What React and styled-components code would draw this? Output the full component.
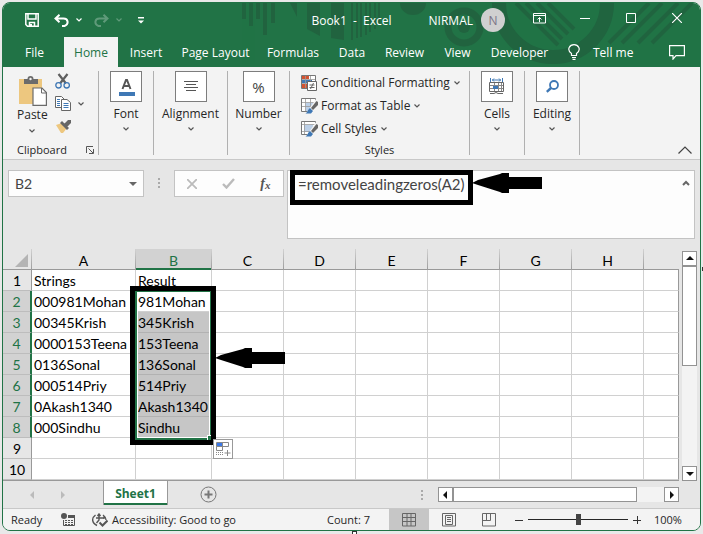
import React from "react";
import styled, { createGlobalStyle, css } from "styled-components";

const green = "#217346";
const ui = `"Open Sans", "Noto Sans", sans-serif`;
const sheetFont = `Lato, "Open Sans", sans-serif`;

const Global = createGlobalStyle`
  *, *::before, *::after { box-sizing: border-box; }
  body { margin: 0; background: #e9e9e9; font-family: ${ui}; font-size: 12px; color: #262626; }
  button, input, textarea { font: inherit; color: inherit; margin: 0; padding: 0; border: 0; background: none; border-radius: 0; outline: none; }
  button { cursor: pointer; }
  svg { display: block; flex: none; }
`;

const Desktop = styled.div`
  position: relative;
  min-height: 100vh;
  padding: 2px 2px 3px;
  display: flex;
  flex-direction: column;
`;
const Window = styled.main`
  flex: 1;
  display: flex;
  flex-direction: column;
  border: 1px solid ${green};
  border-radius: 8px;
  overflow: hidden;
  background: #e6e6e6;
`;
const Handle = styled.i`
  position: absolute;
  width: 5px;
  height: 4px;
  border: 1px solid #333;
  background: #fff;
  ${(p) => (p.$side === "right" ? css`right: -4px; top: 50%;` : css`bottom: -1px; left: 50%;`)}
`;

/* Header */
const Header = styled.header`
  position: relative;
  background: ${green};
  color: #fff;
`;
const Pattern = styled.svg`
  position: absolute;
  top: 0;
  right: 0;
`;
const TitleBar = styled.div`
  position: relative;
  display: grid;
  grid-template-columns: 1fr auto 1fr;
  align-items: center;
  height: 34px;
`;
const QuickAccess = styled.div`
  display: flex;
  align-items: center;
  padding-left: 22px;
`;
const QuickButton = styled.button`
  display: flex;
  align-items: center;
  gap: 7px;
  margin-right: ${(p) => p.$gap || 0}px;
  opacity: ${(p) => (p.disabled ? 0.28 : 1)};
`;
const Title = styled.h1`
  margin: 0;
  font-size: 12px;
  font-weight: 400;
  white-space: pre;
`;
const Account = styled.div`
  display: flex;
  align-items: center;
  justify-content: flex-end;
`;
const Avatar = styled.span`
  display: grid;
  place-items: center;
  width: 24px;
  height: 24px;
  margin: 0 11px 0 8px;
  border-radius: 50%;
  background: #d0d0d0;
  color: #7a7486;
`;
const WindowButton = styled.button`
  display: grid;
  place-items: center;
  width: 46px;
  height: 30px;
  margin-bottom: 4px;
`;
const Tabs = styled.nav`
  position: relative;
  display: flex;
  height: 30px;
`;
const Tab = styled.button`
  width: ${(p) => p.$w}px;
  text-align: center;
  white-space: nowrap;
  color: ${(p) => (p.$active ? green : "#fff")};
  background: ${(p) => (p.$active ? "#f3f3f3" : "none")};
`;
const TellMe = styled.button`
  display: flex;
  align-items: center;
  gap: 13px;
  margin-left: 10px;
`;
const CommentButton = styled.button`
  margin-left: auto;
  padding-right: 15px;
`;

/* Ribbon */
const Ribbon = styled.section`
  display: flex;
  height: 93px;
  padding: 4px 0;
  background: #f3f3f3;
  border-bottom: 1px solid #c8c8c8;
`;
const Group = styled.div`
  position: relative;
  display: flex;
  flex-direction: column;
  width: ${(p) => p.$w}px;
  border-right: 1px solid #b0b0b0;
`;
const GroupName = styled.div`
  display: flex;
  align-items: center;
  justify-content: ${(p) => (p.$spread ? "space-between" : "center")};
  height: 10px;
  margin-top: auto;
  padding: ${(p) => (p.$spread ? "0 4px 0 14px" : "0")};
  font-size: 11px;
  line-height: 10px;
`;
const Collapsed = styled.button`
  display: flex;
  flex-direction: column;
  align-items: center;
  white-space: nowrap;
  line-height: 16px;
`;
const IconBox = styled.span`
  display: grid;
  place-items: center;
  width: 32px;
  height: 31px;
  margin-bottom: 4px;
  border: 1px solid #7d7d7d;
  background: #fff;
  font-size: 15px;
  color: #444;
`;
const LabelText = styled.span`
  margin-bottom: 5px;
`;
const ClipRow = styled.div`
  display: flex;
  gap: 7px;
  padding-left: 14px;
`;
const Paste = styled.button`
  display: flex;
  flex-direction: column;
  align-items: center;
  gap: 1px;
  line-height: 16px;
  padding-top: 4px;
`;
const SmallTools = styled.div`
  display: flex;
  flex-direction: column;
  align-items: flex-start;
  gap: 6px;
  padding-top: 1px;
`;
const Small = styled.button`
  display: flex;
  align-items: center;
  gap: 6px;
  height: 17px;
`;
const StyleButton = styled.button`
  display: flex;
  align-items: center;
  gap: 3px;
  height: 23px;
  padding-left: 11px;
  white-space: nowrap;
  svg:last-child { margin-left: 1px; }
`;
const CollapseRibbon = styled.button`
  align-self: flex-end;
  margin-left: auto;
  padding: 0 8px 1px 0;
`;

/* Formula bar */
const FormulaBar = styled.section`
  display: flex;
  align-items: flex-start;
  padding: 10px 5px 10px;
`;
const NameBox = styled.div`
  display: flex;
  align-items: center;
  width: 136px;
  height: 27px;
  border: 1px solid #c3c3c3;
  background: #fdfdfd;
  padding: 0 6px;
  input { flex: 1; min-width: 0; font: 14px ${sheetFont}; color: #444; }
`;
const Dots = styled.div`
  display: grid;
  gap: 2px;
  margin: ${(p) => p.$margin};
  i { width: 2px; height: 2px; background: #aaa; }
`;
const EntryButtons = styled.div`
  display: flex;
  align-items: center;
  justify-content: space-around;
  width: 110px;
  height: 27px;
  border: 1px solid #c3c3c3;
  background: #fdfdfd;
`;
const Fx = styled.span`
  font: italic 700 14px "Liberation Serif", serif;
  color: #555;
  sub { font-size: 11px; vertical-align: -1px; }
`;
const FormulaField = styled.div`
  position: relative;
  display: flex;
  flex: 1;
  align-items: flex-start;
  height: 69px;
  margin-left: 3px;
  border: 1px solid #c3c3c3;
  background: #fdfdfd;
  textarea {
    flex: 1;
    min-width: 0;
    height: 67px;
    padding: 4px 0 0 10px;
    resize: none;
    overflow: hidden;
    font: 15px/19px ${sheetFont};
    color: #444;
  }
  button { padding: 9px 4px; }
`;
const Outline = styled.div`
  position: absolute;
  left: ${(p) => p.$x}px;
  top: ${(p) => p.$y}px;
  width: ${(p) => p.$w}px;
  height: ${(p) => p.$h}px;
  border: 5px solid #000;
  pointer-events: none;
`;
const Pointer = styled.svg`
  position: absolute;
  left: ${(p) => p.$x}px;
  top: ${(p) => p.$y}px;
`;

/* Sheet */
const SheetArea = styled.section`
  display: flex;
`;
const SheetPane = styled.div`
  position: relative;
  flex: 1;
  min-width: 0;
  border-bottom: 1px solid #999;
`;
const Table = styled.table`
  width: 100%;
  table-layout: fixed;
  border-spacing: 0;
  font: 14px/18px ${sheetFont};
  color: #000;
  th { font-weight: 400; }
  col.head { width: 29px; }
  col.a { width: 104px; }
  col.b { width: 76px; }
  col.std { width: 72px; }
`;
const ColHead = styled.th`
  height: 21px;
  padding: 2px 0 0;
  border-right: 1px solid;
  border-image: linear-gradient(#d4d4d4, #999) 1;
  box-shadow: inset 0 -1px #999;
  ${(p) => p.$selected && css`
    background: #d2d2d2;
    color: ${green};
    box-shadow: inset 0 -2px ${green};
  `}
  &:last-child { border-right: 0; }
`;
const Corner = styled(ColHead)`
  padding: 0;
  svg { margin: 2px 0 0 12px; }
`;
const RowHead = styled.th`
  height: 21px;
  padding: 2px 0 0;
  border-right: 1px solid #999;
  border-bottom: 1px solid #bdbdbd;
  ${(p) => p.$selected && css`
    background: #d2d2d2;
    color: ${green};
    border-right: 2px solid ${green};
  `}
`;
const Cell = styled.td`
  height: 21px;
  padding: 2px 0 0 2px;
  white-space: nowrap;
  border-right: 1px solid #d0d0d0;
  border-bottom: 1px solid #d0d0d0;
  background: #fff;
  &:last-child { border-right-color: #999; }
  ${(p) => p.$selected && css`
    background: #c6c6c6;
    border-bottom-color: #b2b2b2;
  `}
`;
const Selection = styled.div`
  position: absolute;
  left: 132px;
  top: 41px;
  width: 77px;
  height: 150px;
  border: 2px solid ${green};
  box-shadow: inset 0 0 0 1px #fff;
  &::after {
    content: "";
    position: absolute;
    right: -2px;
    bottom: -2px;
    width: 5px;
    height: 5px;
    background: ${green};
    border: solid #fff;
    border-width: 1px 0 0 1px;
  }
`;
const FillOptions = styled.button`
  position: absolute;
  left: 210px;
  top: 190px;
  width: 20px;
  height: 20px;
  border: 1px solid #999;
  background: #fff;
`;
const VScroll = styled.div`
  display: flex;
  flex-direction: column;
  width: 15px;
  margin: 2px 3px 0;
  background: #f3f3f3;
`;
const HScroll = styled.div`
  display: flex;
  width: 241px;
  height: 15px;
  margin-right: 21px;
  background: #f3f3f3;
`;
const ScrollButton = styled.button`
  display: grid;
  place-items: center;
  flex: none;
  width: 15px;
  height: 15px;
  border: 1px solid #939393;
  background: #fff;
`;
const Thumb = styled.div`
  border: 1px solid #939393;
  background: #fff;
  ${(p) => (p.$vertical ? css`height: 100px; margin-bottom: auto;` : css`width: 184px; margin-right: auto;`)}
`;

/* Sheet tabs and status */
const SheetTabs = styled.nav`
  display: flex;
  align-items: center;
  height: 28px;
  border-bottom: 1px solid #c8c8c8;
`;
const NavArrows = styled.div`
  display: flex;
  gap: 22px;
  width: 100px;
  padding-left: 26px;
`;
const SheetTab = styled.button`
  align-self: flex-start;
  width: 65px;
  height: 24px;
  background: #fff;
  border: solid #999;
  border-width: 0 1px;
  box-shadow: inset 0 -2px ${green};
  color: ${green};
  font-weight: 700;
`;
const AddSheet = styled.button`
  margin: 0 auto 0 32px;
`;
const Status = styled.footer`
  display: flex;
  flex: 1;
  align-items: center;
  min-height: 21px;
  background: #f3f3f3;
  font-size: 11px;
  white-space: nowrap;
`;
const Ready = styled.span`
  width: 58px;
  padding-left: 8px;
`;
const Access = styled.button`
  display: flex;
  align-items: center;
  gap: 4px;
  margin-left: 17px;
`;
const Count = styled.span`
  margin: 0 19px 0 auto;
`;
const View = styled.button`
  display: grid;
  place-items: center;
  align-self: stretch;
  width: 40px;
  background: ${(p) => (p.$active ? "#c6c6c6" : "none")};
`;
const Zoom = styled.div`
  display: flex;
  align-items: center;
  gap: 5px;
  margin-left: 6px;
  input {
    appearance: none;
    width: 100px;
    height: 12px;
    background: linear-gradient(#262626, #262626) center / 100% 1px no-repeat;
  }
  input::-webkit-slider-thumb {
    appearance: none;
    width: 5px;
    height: 11px;
    background: #444;
  }
`;
const Percent = styled.span`
  width: 46px;
  margin-left: 13px;
`;

const Chevron = ({ color = "#555" }) => (
  <svg width="6" height="4" viewBox="0 0 6 4" fill="none" stroke={color} strokeWidth="1.2"><path d="M.5.5 3 3 5.500.5" /></svg>
);
const Triangle = ({ dir, color = "#111" }) => {
  const d = { up: "M0 5 4 1l4 4z", down: "M0 2h8L4 6z", left: "M5 0v8L1 4z", right: "M2 0v8l4-4z" }[dir];
  return <svg width="8" height="8" viewBox="0 0 8 8" fill={color}><path d={d} /></svg>;
};
const Arrow = (p) => (
  <Pointer width="71" height="20" viewBox="0 0 71 20" {...p}><path d="M0 10 6 7 28 1l2-1h7v4h33v12H37v4h-7l-2-1L6 12z" /></Pointer>
);

const HeaderPattern = () => (
  <Pattern width="470" height="64" viewBox="230 3 470 64" fill="#215c3c" stroke="none" opacity=".65" aria-hidden="true">
    <path d="M242 3h4v16h-4zM249 3h4v23h-4zM256 3h4v16h-4zM263 3h4v32h-4zM271 3h4v20h-4zM290 3h7v14zM307 3h13v33l-13-7zM331 3h13v37l-13-2z" />
    <path d="M351 3h2v37h-2zM356 3h2v35h-2zM360 3h2v34h-2zM365 3h2v32h-2zM369 3h2v29h-2zM374 3h2v26h-2zM378 3h2v20h-2z" />
    <path d="M400 3a13 12 0 0 0 26 0z" />
    <g fill="none" stroke="#215c3c">
      <circle cx="464" cy="27" r="16" strokeWidth="7" />
      <circle cx="553" cy="3" r="54" strokeWidth="14" />
      <path strokeWidth="4" d="m516 3 42 42M526 3l36 36M537 3l31 31M548 3l26 26M609 43l40-40M622 43l40-40M638 43l40-40M652 43l40-40" />
    </g>
    <circle cx="464" cy="27" r="6" />
  </Pattern>
);

const SaveIcon = () => (
  <svg width="14" height="14" viewBox="0 0 14 14" fill="none" stroke="#fff" strokeWidth="1.5"><path d="M.8.8h12.400v12.400H2.500L.8 11.500zM3 1v5h8V1" /><path d="M4.500 13V9.500h5V13" /><path d="M5 11h2v2H5z" fill="#fff" stroke="none" /></svg>
);
const UndoIcon = ({ flip }) => (
  <svg width="15" height="13" viewBox="0 0 15 13" fill="none" stroke="#fff" strokeWidth="2"><g transform={flip ? "translate(15 0) scale(-1 1)" : undefined}><path d="M5.500.7 1.500 4.500l4 3.800M2 4.500h7.500c5 0 5.500 6 1 7.500H8" /></g></svg>
);
const PasteIcon = () => (
  <svg width="29" height="31" viewBox="0 0 29 31"><path fill="#edc77f" d="M1 4h23v25H1z" /><path fill="#6b6b6b" d="M6 4h3.500a3 3 0 0 1 6 0H20v5H6z" /><circle cx="12.500" cy="4" r="1.200" fill="#f3f3f3" /><path fill="#fff" stroke="#6b6b6b" strokeWidth="1.200" d="M15 13h9l4.400 4.500V30.400H15z" /><path fill="none" stroke="#6b6b6b" d="M23.500 13v5H28" /></svg>
);
const CutIcon = () => (
  <svg width="16" height="16" viewBox="0 0 16 16" fill="none"><path stroke="#5f5f5f" strokeWidth="2.200" d="M3.500 1 11 10.500M12.500 1 5 10.500" /><g stroke="#3f78b5" strokeWidth="1.300"><circle cx="3.500" cy="12.300" r="2.700" /><circle cx="11.700" cy="12.300" r="2.700" /></g></svg>
);
const CopyIcon = () => (
  <svg width="17" height="15" viewBox="0 0 17 15" fill="#fff" stroke="#666"><path d="M.5.5h6l3 3v8h-9z" /><path d="M6.500 3.500h5.500l3.500 3v8h-9z" /><path stroke="#3f78b5" d="M2 3.500h3M2 5.500h3M2 7.500h3M2 9.500h3M8.500 7.500h5M8.500 9.500h5M8.500 11.500h5" /></svg>
);
const PainterIcon = () => (
  <svg width="17" height="15" viewBox="0 0 17 15"><path fill="#edc77f" d="m1 6 6-2 5 5-4 5H6z" /><path fill="#666" d="m5 4 2-2 7 7-2 2zM8.500 5.500 13 1h3v3l-4.500 4.500z" /></svg>
);
const LauncherIcon = () => (
  <svg width="8" height="8" viewBox="0 0 8 8" fill="none" stroke="#555"><path d="M.5 7V.5H7M2.500 2.500 7 7M7.500 3v4.500H3" /></svg>
);
const FontIcon = () => (
  <svg width="17" height="18" viewBox="0 0 17 18"><path fill="none" stroke="#555" strokeWidth="2" d="M4.500 11 8 2h1l3.500 9M6 8h5" /><path fill="#3f78b5" d="M1 14h16v4H1z" /></svg>
);
const AlignIcon = () => (
  <svg width="14" height="11" viewBox="0 0 14 11" stroke="#555"><path d="M0 .5h14M2 3.500h10M0 6.500h14M2 9.500h10" /></svg>
);
const TableIcon = ({ kind }) => (
  <svg width="17" height="16" viewBox="0 0 17 16">
    <path fill="#fff" stroke="#777" d="M.5.5h14v13H.5z" />
    {kind === "cond" ? <path fill="#d35230" d="M1 1h7v3H1zM1 9h5v4H1z" /> : <path fill="#bcd0e8" d={kind === "cell" ? "M3 4h9v7H3z" : "M5 5h9v8H5z"} />}
    {kind === "cond" && <path fill="#3f78b5" d="M1 5h10v3H1z" />}
    <path fill="none" stroke="#999" strokeOpacity=".8" d={kind === "cell" ? "M3.500 1v12M1 3.500h13M1 10.500h11" : "M4.500 1v12M9.500 1v12M1 4.500h13M1 8.500h13"} />
    {kind === "cond" ? (
      <g fill="#fff" stroke="#666"><path d="M6.500 6.500h9v9h-9z" /><path d="M8.500 10h5M8.500 12.500h5M12.500 8l-3 6" /></g>
    ) : (
      <g><path fill="#f3f3f3" d="m15 1 2 2v13H5l3-5z" /><path fill="#666" d="m15.500 3 1.500 1v3l-5 5-2-2z" /><path fill="#3f78b5" d="m9 10 3 3-2 2.500H4.500C7 14 7 11 9 10z" /></g>
    )}
  </svg>
);
const CellsIcon = () => (
  <svg width="16" height="17" viewBox="0 0 16 17" fill="none"><path stroke="#3f78b5" d="M1.500 0v4M13.500 0v4M3 2h9M5 .5 3.500 2 5 3.500M10 .5 11.500 2 10 3.500" /><path stroke="#888" d="M1 7.500h13M1 10.500h13M5.500 5v9M9.500 5v9M12.500 5v9" /><path stroke="#666" d="M.5 4.500h14v9H.5zM1 15.500h4l2-1 2 1h5" /><path fill="#3f78b5" d="M4 8h5v3H4z" /></svg>
);
const FindIcon = () => (
  <svg width="13" height="13" viewBox="0 0 13 13" fill="none" stroke="#3f78b5"><circle cx="8" cy="5" r="4" strokeWidth="1.800" /><path strokeWidth="2.400" d="M5 8 .8 11.800" /></svg>
);
const StatusTableIcon = () => (
  <svg width="14" height="13" viewBox="0 0 14 13"><path fill="none" stroke="#555" d="M7 2.500h6.500v10h-11V7" /><path fill="#555" d="M7 2h7v3H7z" /><circle cx="3" cy="3" r="3" fill="#555" /><path stroke="#555" strokeDasharray="2 1" d="M4 7.500h8M4 9.500h8M4 11.500h8" /></svg>
);
const AccessIcon = () => (
  <svg width="16" height="14" viewBox="0 0 16 14" fill="none" stroke="#555" strokeWidth="1.400"><path d="M3.500 2C-.5 5-.5 10 5 12.500M11 2c2 1.500 3 3 3 5M4 5h8M7 1v6l-2.500 3M5.500 3 7 1l1.500 2M12 3v3" /><path strokeWidth="2" d="m7.500 9.500 3 3 5-5" /></svg>
);
const ViewIcon = ({ d }) => (
  <svg width="14" height="14" viewBox="0 0 14 14" fill="none" stroke="#666"><path d={`M.5.5h13v12.500H.5z${d}`} /></svg>
);

const tabs = [["File", 59], ["Home", 54], ["Insert", 56], ["Page Layout", 83], ["Formulas", 72], ["Data", 46], ["Review", 59], ["View", 47], ["Developer", 77]];
const columns = ["A", "B", "C", "D", "E", "F", "G", "H", ""];
const rows = [
  ["Strings", "Result"], ["000981Mohan", "981Mohan"], ["00345Krish", "345Krish"], ["0000153Teena", "153Teena"],
  ["0136Sonal", "136Sonal"], ["000514Priy", "514Priy"], ["0Akash1340", "Akash1340"], ["000Sindhu", "Sindhu"], [], [],
];

const TabList = styled.div`
  display: flex;
  padding-left: 2px;
`;

const RibbonGroup = ({ label, width, children }) => (
  <Group $w={width}>
    <Collapsed>
      <IconBox>{children}</IconBox>
      <LabelText>{label}</LabelText>
      <Chevron />
    </Collapsed>
  </Group>
);

export default function App() {
  return (
    <Desktop>
      <Global />
      <Window>
        <Header>
          <HeaderPattern />
          <TitleBar>
            <QuickAccess>
              <QuickButton $gap={15} aria-label="Save"><SaveIcon /></QuickButton>
              <QuickButton $gap={12} aria-label="Undo"><UndoIcon /><Chevron color="#fff" /></QuickButton>
              <QuickButton $gap={16} aria-label="Redo" disabled><UndoIcon flip /><Chevron color="#fff" /></QuickButton>
              <QuickButton aria-label="Customize toolbar">
                <svg width="6" height="7" viewBox="0 0 6 7" fill="#fff"><path d="M0 0h6v1.500H0zM0 3.500h6l-3 3z" /></svg>
              </QuickButton>
            </QuickAccess>
            <Title>{"Book1  -  Excel"}</Title>
            <Account>
              NIRMAL<Avatar>N</Avatar>
              <WindowButton aria-label="Ribbon display options">
                <svg width="13" height="11" viewBox="0 0 13 11" fill="none" stroke="#fff"><path d="M.5.5h12v9.500H.5zM.5 2.500h12M6.500 9V4.500M4.500 6.500l2-2 2 2" /></svg>
              </WindowButton>
              <WindowButton aria-label="Minimize"><svg width="10" height="1"><path fill="#fff" d="M0 0h10v1H0z" /></svg></WindowButton>
              <WindowButton aria-label="Maximize"><svg width="10" height="10" fill="none" stroke="#fff"><path d="M.5.5h9v9h-9z" /></svg></WindowButton>
              <WindowButton aria-label="Close"><svg width="10" height="10" stroke="#fff" strokeWidth="1.200"><path d="m0 0 10 10M10 0 0 10" /></svg></WindowButton>
            </Account>
          </TitleBar>
          <Tabs>
            <TabList>
              {tabs.map(([name, w]) => <Tab key={name} $w={w} $active={name === "Home"}>{name}</Tab>)}
            </TabList>
            <TellMe>
              <svg width="12" height="16" viewBox="0 0 12 16" fill="none" stroke="#fff" strokeWidth="1.200"><path d="M3.500 11.500v-2C-2 5.500 2 .6 6 .6s8 4.900 2.500 8.900v2zM4 13.500h4M4.500 15.400h3" /></svg>
              Tell me
            </TellMe>
            <CommentButton aria-label="Comments">
              <svg width="16" height="15" viewBox="0 0 16 15" fill="none" stroke="#fff" strokeWidth="1.200"><path d="M.6.600h14.800v10H7l-3 3.500v-3.500H.6z" /></svg>
            </CommentButton>
          </Tabs>
        </Header>

        <Ribbon>
          <Group $w={96}>
            <ClipRow>
              <Paste><PasteIcon /><LabelText>Paste</LabelText><Chevron /></Paste>
              <SmallTools>
                <Small aria-label="Cut"><CutIcon /></Small>
                <Small aria-label="Copy"><CopyIcon /><Chevron /></Small>
                <Small aria-label="Format painter"><PainterIcon /></Small>
              </SmallTools>
            </ClipRow>
            <GroupName $spread>Clipboard<LauncherIcon /></GroupName>
          </Group>
          <RibbonGroup label="Font" width={55}><FontIcon /></RibbonGroup>
          <RibbonGroup label="Alignment" width={74}><AlignIcon /></RibbonGroup>
          <RibbonGroup label="Number" width={62}>%</RibbonGroup>
          <Group $w={180}>
            <StyleButton><TableIcon kind="cond" />Conditional Formatting<Chevron /></StyleButton>
            <StyleButton><TableIcon kind="table" />Format as Table<Chevron /></StyleButton>
            <StyleButton><TableIcon kind="cell" />Cell Styles<Chevron /></StyleButton>
            <GroupName>Styles</GroupName>
          </Group>
          <RibbonGroup label="Cells" width={55}><CellsIcon /></RibbonGroup>
          <RibbonGroup label="Editing" width={55}><FindIcon /></RibbonGroup>
          <CollapseRibbon aria-label="Collapse ribbon">
            <svg width="14" height="8" viewBox="0 0 14 8" fill="none" stroke="#444" strokeWidth="1.200"><path d="m.5 7.500 6.500-6.500 6.500 6.500" /></svg>
          </CollapseRibbon>
        </Ribbon>

        <FormulaBar>
          <NameBox>
            <input aria-label="Name box" defaultValue="B2" />
            <button aria-label="Open name list"><Triangle dir="down" color="#666" /></button>
          </NameBox>
          <Dots $margin="8px 14px 0"><i /><i /><i /></Dots>
          <EntryButtons>
            <button aria-label="Cancel"><svg width="10" height="10" stroke="#bbb" strokeWidth="1.800"><path d="m0 0 10 10M10 0 0 10" /></svg></button>
            <button aria-label="Enter"><svg width="13" height="11" fill="none" stroke="#bbb" strokeWidth="2.400"><path d="m1 6 3.500 3.500L12 1" /></svg></button>
            <button aria-label="Insert function"><Fx>f<sub>x</sub></Fx></button>
          </EntryButtons>
          <FormulaField>
            <textarea aria-label="Formula" defaultValue="=removeleadingzeros(A2)" spellCheck="false" />
            <button aria-label="Collapse formula bar">
              <svg width="8" height="6" viewBox="0 0 8 6" fill="none" stroke="#666" strokeWidth="2"><path d="m1 5 3-3 3 3" /></svg>
            </button>
            <Outline $x={2} $y={-1} $w={183} $h={35} />
            <Arrow $x={184} $y={2} />
          </FormulaField>
        </FormulaBar>

        <SheetArea>
          <SheetPane>
            <Table>
              <colgroup>
                <col className="head" /><col className="a" /><col className="b" />
                {columns.slice(2, 8).map((c) => <col key={c} className="std" />)}
                <col />
              </colgroup>
              <thead>
                <tr>
                  <Corner><svg width="13" height="13"><path fill="#b4b4b4" d="M13 0v13H0z" /></svg></Corner>
                  {columns.map((c) => <ColHead key={c} $selected={c === "B"}>{c}</ColHead>)}
                </tr>
              </thead>
              <tbody>
                {rows.map((row, r) => (
                  <tr key={r}>
                    <RowHead $selected={r > 0 && r < 8}>{r + 1}</RowHead>
                    {columns.map((c, i) => <Cell key={c} $selected={i === 1 && r > 1 && r < 8}>{row[i]}</Cell>)}
                  </tr>
                ))}
              </tbody>
            </Table>
            <Selection />
            <Outline $x={127} $y={37} $w={86} $h={159} />
            <Arrow $x={212} $y={99} />
            <FillOptions aria-label="Auto fill options">
              <svg width="18" height="18" viewBox="0 0 18 18" fill="none" stroke="#888"><path d="M2.500 2.500h12v4h-12zM2.500 6.500h6v4h-6zM8.500 3v4M13.500 10v6M10.500 13h6" /><path fill="#3b78e7" stroke="none" d="M3 3h5v3H3z" /><path strokeDasharray="1 1" d="M2 12.500h7M2 14.500h7" /></svg>
            </FillOptions>
          </SheetPane>
          <VScroll>
            <ScrollButton aria-label="Scroll up"><Triangle dir="up" /></ScrollButton>
            <Thumb $vertical />
            <ScrollButton aria-label="Scroll down"><Triangle dir="down" /></ScrollButton>
          </VScroll>
        </SheetArea>

        <SheetTabs>
          <NavArrows><Triangle dir="left" color="#bbb" /><Triangle dir="right" color="#bbb" /></NavArrows>
          <SheetTab>Sheet1</SheetTab>
          <AddSheet aria-label="New sheet">
            <svg width="17" height="17" viewBox="0 0 17 17" fill="none" stroke="#777"><circle cx="8.500" cy="8.500" r="7.500" /><path strokeWidth="2" d="M8.500 4.500v8M4.500 8.500h8" /></svg>
          </AddSheet>
          <Dots $margin="0 15px 0 0"><i /><i /><i /></Dots>
          <HScroll>
            <ScrollButton aria-label="Scroll left"><Triangle dir="left" /></ScrollButton>
            <Thumb />
            <ScrollButton aria-label="Scroll right"><Triangle dir="right" /></ScrollButton>
          </HScroll>
        </SheetTabs>

        <Status>
          <Ready>Ready</Ready>
          <StatusTableIcon />
          <Access><AccessIcon />Accessibility: Good to go</Access>
          <Count>Count: 7</Count>
          <View $active aria-label="Normal view"><ViewIcon d="M5 .5v12.500M9 .5v12.500M.5 4.500h13M.5 8.500h13" /></View>
          <View aria-label="Page layout view"><ViewIcon d="M3.500 2.500h7v9h-7zM5 4.500h4M5 6.500h4M5 8.500h4" /></View>
          <View aria-label="Page break view"><ViewIcon d="M4.500.5v7M8.500.5v7M.5 7.500h8" /></View>
          <Zoom>
            <button aria-label="Zoom out"><svg width="8" height="8" stroke="#333"><path d="M0 4.500h8" /></svg></button>
            <input type="range" aria-label="Zoom" min="0" max="100" defaultValue="50" />
            <button aria-label="Zoom in"><svg width="8" height="8" stroke="#333"><path d="M0 4.500h8M4.500 0v8" /></svg></button>
          </Zoom>
          <Percent>100%</Percent>
        </Status>
      </Window>
      <Handle $side="right" />
      <Handle $side="bottom" />
    </Desktop>
  );
}
